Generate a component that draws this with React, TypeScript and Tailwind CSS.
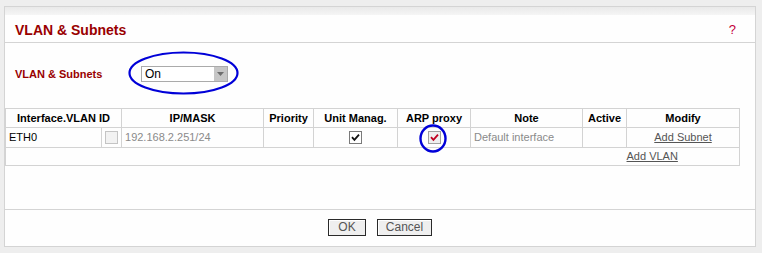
import React from 'react';

const cell = 'border border-[#d3d3d3] p-0';
const head = `${cell} text-center font-bold text-black`;

function Check({ tone }: { tone: 'off' | 'black' | 'red' }) {
  if (tone === 'off') {
    return <span className="inline-block w-[13px] h-[13px] border border-[#c4c4c4] bg-[#f2f2f2] align-middle" />;
  }
  const color = tone === 'red' ? '#c00020' : '#111111';
  return (
    <span
      className={`inline-flex w-[13px] h-[13px] items-center justify-center align-middle border ${
        tone === 'red' ? 'border-[#a0a0a0] bg-[#efefef]' : 'border-[#7a7a7a] bg-white'
      }`}
    >
      <svg width="9" height="9" viewBox="0 0 9 9">
        <path d="M1 4.2 L3.4 6.8 L8 1.6" fill="none" stroke={color} strokeWidth="1.8" />
      </svg>
    </span>
  );
}

export default function App() {
  return (
    <div
      className="relative w-[762px] h-[253px] bg-[#eeeeee] pt-[6px] pl-[4px] text-[11px] text-[#111]"
      style={{ fontFamily: '"Liberation Sans", Arial, sans-serif' }}
    >
      <div className="w-[752px] h-[241px] border border-[#d4d4d4] bg-[#fefefe] flex flex-col">
        {/* top band */}
        <div className="h-[8px] bg-gradient-to-b from-[#e9e9e9] to-[#f5f5f5]" />

        {/* header */}
        <div className="h-[28px] border-b border-[#d4d4d4] flex items-start justify-between pt-[7px] pl-[10px] pr-[19px]">
          <span className="text-[14px] leading-[16px] font-bold text-[#990000]">VLAN &amp; Subnets</span>
          <span className="text-[13px] leading-[16px] text-[#c4003a]">?</span>
        </div>

        {/* body */}
        <div className="h-[167px] border-b border-[#d4d4d4] pt-[23px]">
          <div className="flex items-center h-[16px] pl-[10px]">
            <span className="w-[126px] font-bold text-[#990000]">VLAN &amp; Subnets</span>
            <div className="w-[87px] h-[16px] border border-[#aaaaaa] bg-white flex items-center justify-between">
              <span className="pl-[3px] text-[12px] leading-[14px] text-black">On</span>
              <span className="w-[13px] h-[14px] bg-[#c6c6c6] flex items-center justify-center">
                <svg width="7" height="4" viewBox="0 0 7 4">
                  <path d="M0 0 H7 L3.5 4 Z" fill="#6e6e6e" />
                </svg>
              </span>
            </div>
          </div>

          <table className="mt-[26px] border-collapse table-fixed w-[735px] leading-[13px]">
            <colgroup>
              <col className="w-[96px]" />
              <col className="w-[20px]" />
              <col className="w-[142px]" />
              <col className="w-[50px]" />
              <col className="w-[84px]" />
              <col className="w-[73px]" />
              <col className="w-[112px]" />
              <col className="w-[44px]" />
              <col className="w-[113px]" />
            </colgroup>
            <tbody>
              <tr className="h-[19px]">
                <td colSpan={2} className={head}>Interface.VLAN ID</td>
                <td className={head}>IP/MASK</td>
                <td className={head}>Priority</td>
                <td className={head}>Unit Manag.</td>
                <td className={head}>ARP proxy</td>
                <td className={head}>Note</td>
                <td className={head}>Active</td>
                <td className={head}>Modify</td>
              </tr>
              <tr className="h-[20px]">
                <td className={`${cell} pl-[3px] text-black`}>ETH0</td>
                <td className={`${cell} text-center`}><Check tone="off" /></td>
                <td className={`${cell} pl-[3px] text-[#8a8a8a]`}>192.168.2.251/24</td>
                <td className={cell} />
                <td className={`${cell} text-center`}><Check tone="black" /></td>
                <td className={`${cell} text-center`}><Check tone="red" /></td>
                <td className={`${cell} pl-[3px] text-[#8a8a8a]`}>Default interface</td>
                <td className={cell} />
                <td className={`${cell} text-center`}>
                  <span className="underline text-[#555555]">Add Subnet</span>
                </td>
              </tr>
              <tr className="h-[18px]">
                <td colSpan={8} className="border-y border-l border-[#d3d3d3] p-0" />
                <td className="border-y border-r border-[#d3d3d3] p-0">
                  <span className="underline text-[#555555]">Add VLAN</span>
                </td>
              </tr>
            </tbody>
          </table>
        </div>

        {/* footer */}
        <div className="flex-1 flex justify-center items-start pt-[9px] gap-[11px]">
          <button className="w-[38px] h-[17px] border border-[#2a2a2a] bg-[#efefef] text-[12px] leading-[15px] text-[#555555] shadow-[inset_1px_1px_0_#ffffff]">
            OK
          </button>
          <button className="w-[55px] h-[17px] border border-[#2a2a2a] bg-[#efefef] text-[12px] leading-[15px] text-[#555555] shadow-[inset_1px_1px_0_#ffffff]">
            Cancel
          </button>
        </div>
      </div>

      {/* hand-drawn annotation marks */}
      <svg className="absolute left-0 top-0 pointer-events-none" width="762" height="253">
        <ellipse cx="183.5" cy="73" rx="54" ry="20.5" fill="none" stroke="#0000d8" strokeWidth="2.2" />
        <ellipse cx="433" cy="138.5" rx="12.5" ry="13" fill="none" stroke="#0000d8" strokeWidth="2.4" />
      </svg>
    </div>
  );
}
